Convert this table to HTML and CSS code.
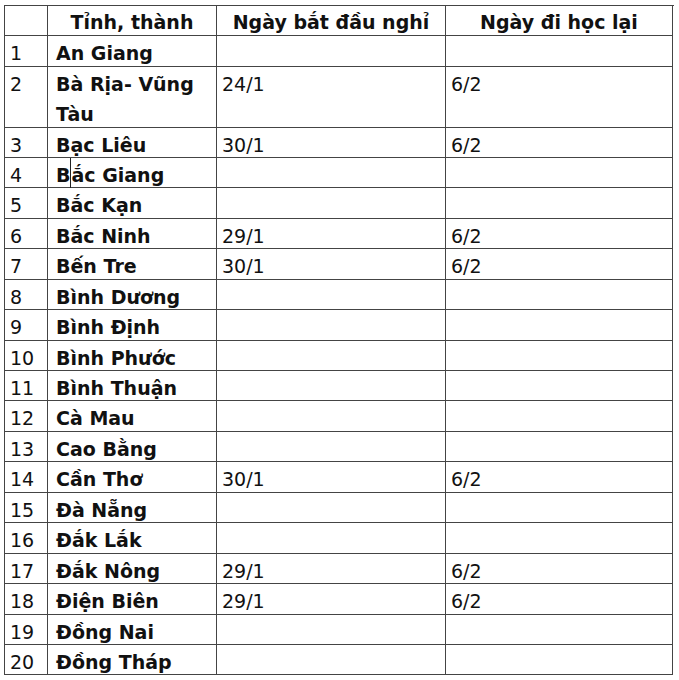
FILE: index.html
```html
<!DOCTYPE html>
<html lang="vi">
<head>
<meta charset="utf-8">
<title>Lịch nghỉ học</title>
<link rel="stylesheet" href="styles.css">
</head>
<body>
<div class="table">
  <div class="c hd"></div><div class="c hd">Tỉnh, thành</div><div class="c hd">Ngày bắt đầu nghỉ</div><div class="c hd">Ngày đi học lại</div>

  <div class="c num">1</div><div class="c name">An Giang</div><div class="c date"></div><div class="c date"></div>
  <div class="c num">2</div><div class="c name">Bà Rịa- Vũng Tàu</div><div class="c date">24/1</div><div class="c date">6/2</div>
  <div class="c num">3</div><div class="c name">Bạc Liêu</div><div class="c date">30/1</div><div class="c date">6/2</div>
  <div class="c num">4</div><div class="c name">B<span class="caret"></span>ắc Giang</div><div class="c date"></div><div class="c date"></div>
  <div class="c num">5</div><div class="c name">Bắc Kạn</div><div class="c date"></div><div class="c date"></div>
  <div class="c num">6</div><div class="c name">Bắc Ninh</div><div class="c date">29/1</div><div class="c date">6/2</div>
  <div class="c num">7</div><div class="c name">Bến Tre</div><div class="c date">30/1</div><div class="c date">6/2</div>
  <div class="c num">8</div><div class="c name">Bình Dương</div><div class="c date"></div><div class="c date"></div>
  <div class="c num">9</div><div class="c name">Bình Định</div><div class="c date"></div><div class="c date"></div>
  <div class="c num">10</div><div class="c name">Bình Phước</div><div class="c date"></div><div class="c date"></div>
  <div class="c num">11</div><div class="c name">Bình Thuận</div><div class="c date"></div><div class="c date"></div>
  <div class="c num">12</div><div class="c name">Cà Mau</div><div class="c date"></div><div class="c date"></div>
  <div class="c num">13</div><div class="c name">Cao Bằng</div><div class="c date"></div><div class="c date"></div>
  <div class="c num">14</div><div class="c name">Cần Thơ</div><div class="c date">30/1</div><div class="c date">6/2</div>
  <div class="c num">15</div><div class="c name">Đà Nẵng</div><div class="c date"></div><div class="c date"></div>
  <div class="c num">16</div><div class="c name">Đắk Lắk</div><div class="c date"></div><div class="c date"></div>
  <div class="c num">17</div><div class="c name">Đắk Nông</div><div class="c date">29/1</div><div class="c date">6/2</div>
  <div class="c num">18</div><div class="c name">Điện Biên</div><div class="c date">29/1</div><div class="c date">6/2</div>
  <div class="c num">19</div><div class="c name">Đồng Nai</div><div class="c date"></div><div class="c date"></div>
  <div class="c num">20</div><div class="c name">Đồng Tháp</div><div class="c date"></div><div class="c date"></div>
</div>
</body>
</html>
```

FILE: styles.css
```css
html, body {
  margin: 0;
  background: #ffffff;
}

body {
  padding: 5px 0 0 4px;
  font-family: "DejaVu Sans", "Liberation Sans", sans-serif;
  font-size: 19px;
  color: #111111;
}

.table {
  display: grid;
  grid-template-columns: 43px 169px 229px 227px;
  grid-template-rows: 30px 31px 60.5px repeat(18, 30.45px);
  width: 669px;
  border-top: 1px solid #444444;
  border-left: 1px solid #444444;
}

.c {
  box-sizing: border-box;
  border-right: 1px solid #444444;
  border-bottom: 1px solid #444444;
  padding-top: 2px;
  line-height: 30px;
  white-space: normal;
  overflow: visible;
}

.hd {
  font-weight: bold;
  text-align: center;
  padding-top: 1px;
}

.num {
  padding-left: 5px;
}

.name {
  font-weight: bold;
  padding-left: 8px;
  padding-right: 4px;
}

.date {
  padding-left: 5px;
}

.caret {
  display: inline-block;
  position: relative;
  top: -2px;
  width: 0;
  height: 30px;
  border-left: 1px solid #222222;
  vertical-align: top;
}
```
